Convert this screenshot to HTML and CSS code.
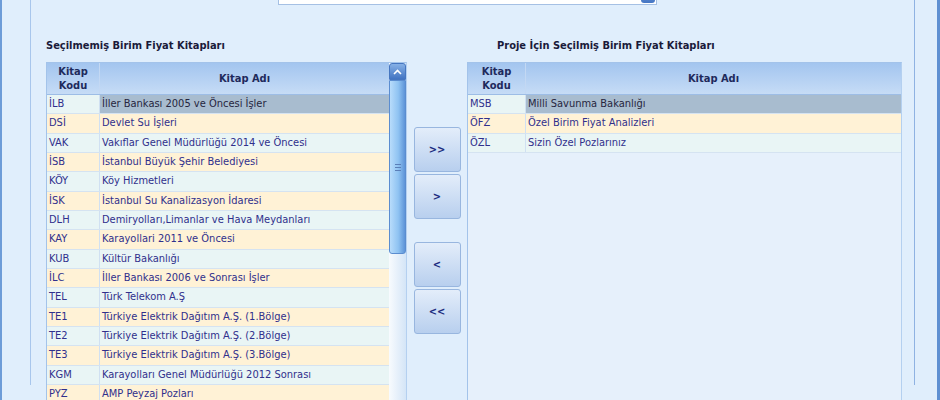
FILE: index.html
```html
<!DOCTYPE html>
<html lang="tr">
<head>
    <meta charset="UTF-8">
    <title>Birim Fiyat Kitapları</title>
    <link rel="stylesheet" href="styles.css">
</head>
<body>
    <div class="frame">
        <div class="panel">
            <div class="top-row">
                <span class="top-label">Hazır Proje Şablonu Seçiniz :</span>
                <div class="combo">
                    <span class="combo-text">Seçilmiş Birim Fiyat Kitapları Şablonu</span>
                    <span class="combo-btn"></span>
                </div>
            </div>

            <div class="lists">
                <div class="side left">
                    <div class="side-title">Seçilmemiş Birim Fiyat Kitapları</div>
                    <div class="grid-box">
                        <div class="grid">
                            <div class="head">
                                <div class="code">Kitap<br>Kodu</div>
                                <div class="name">Kitap Adı</div>
                            </div>
                            <div class="row selected"><div class="code">İLB</div><div class="name">İller Bankası 2005 ve Öncesi İşler</div></div>
                            <div class="row alt"><div class="code">DSİ</div><div class="name">Devlet Su İşleri</div></div>
                            <div class="row"><div class="code">VAK</div><div class="name">Vakıflar Genel Müdürlüğü 2014 ve Öncesi</div></div>
                            <div class="row alt"><div class="code">İSB</div><div class="name">İstanbul Büyük Şehir Belediyesi</div></div>
                            <div class="row"><div class="code">KÖY</div><div class="name">Köy Hizmetleri</div></div>
                            <div class="row alt"><div class="code">İSK</div><div class="name">İstanbul Su Kanalizasyon İdaresi</div></div>
                            <div class="row"><div class="code">DLH</div><div class="name">Demiryolları,Limanlar ve Hava Meydanları</div></div>
                            <div class="row alt"><div class="code">KAY</div><div class="name">Karayollari 2011 ve Öncesi</div></div>
                            <div class="row"><div class="code">KUB</div><div class="name">Kültür Bakanlığı</div></div>
                            <div class="row alt"><div class="code">İLC</div><div class="name">İller Bankası 2006 ve Sonrası İşler</div></div>
                            <div class="row"><div class="code">TEL</div><div class="name">Türk Telekom A.Ş</div></div>
                            <div class="row alt"><div class="code">TE1</div><div class="name">Türkiye Elektrik Dağıtım A.Ş. (1.Bölge)</div></div>
                            <div class="row"><div class="code">TE2</div><div class="name">Türkiye Elektrik Dağıtım A.Ş. (2.Bölge)</div></div>
                            <div class="row alt"><div class="code">TE3</div><div class="name">Türkiye Elektrik Dağıtım A.Ş. (3.Bölge)</div></div>
                            <div class="row"><div class="code">KGM</div><div class="name">Karayolları Genel Müdürlüğü 2012 Sonrası</div></div>
                            <div class="row alt"><div class="code">PYZ</div><div class="name">AMP Peyzaj Pozları</div></div>
                        </div>
                        <div class="scroll">
                            <div class="sb-up">
                                <svg width="9" height="6" viewBox="0 0 9 6"><path d="M1 5 L4.5 1.5 L8 5" fill="none" stroke="#fff" stroke-width="1.6"/></svg>
                            </div>
                            <div class="sb-thumb"><span class="grip"></span></div>
                        </div>
                    </div>
                </div>

                <div class="mover">
                    <div class="btn">&gt;&gt;</div>
                    <div class="btn">&gt;</div>
                    <div class="btn gap">&lt;</div>
                    <div class="btn">&lt;&lt;</div>
                </div>

                <div class="side right">
                    <div class="side-title">Proje İçin Seçilmiş Birim Fiyat Kitapları</div>
                    <div class="grid-box">
                        <div class="grid">
                            <div class="head">
                                <div class="code">Kitap<br>Kodu</div>
                                <div class="name">Kitap Adı</div>
                            </div>
                            <div class="row selected"><div class="code">MSB</div><div class="name">Milli Savunma Bakanlığı</div></div>
                            <div class="row alt"><div class="code">ÖFZ</div><div class="name">Özel Birim Fiyat Analizleri</div></div>
                            <div class="row"><div class="code">ÖZL</div><div class="name">Sizin Özel Pozlarınız</div></div>
                        </div>
                    </div>
                </div>
            </div>
        </div>
    </div>
</body>
</html>
```

FILE: styles.css
```css
body {
    margin: 0;
    height: 400px;
    overflow: hidden;
    background: #e0eefc;
    font-family: "DejaVu Sans Condensed", "DejaVu Sans", sans-serif;
    font-size: 11px;
    color: #30308c;
}

.frame {
    display: flow-root;
    height: 400px;
    box-sizing: border-box;
    border-left: 2px solid #6d9cd8;
    border-right: 3px solid #5f90d2;
    padding: 0 22px 0 28px;
}

.panel {
    height: 100%;
    box-sizing: border-box;
    border-left: 1px solid #a8c6ec;
    border-right: 1px solid #8fb2e2;
    padding: 0 12px 0 15px;
}

/* ust satir (yarisi gorunuyor) */
.top-row {
    display: flex;
    align-items: flex-end;
    height: 20px;
    margin-top: -15px;
}

.top-label {
    width: 232px;
    font-weight: bold;
    color: #1c1c3c;
    line-height: 16px;
    padding-bottom: 2px;
}

.combo {
    width: 379px;
    height: 20px;
    box-sizing: border-box;
    border: 1px solid #a5c0e4;
    background: #fff;
    display: flex;
    align-items: flex-end;
    justify-content: space-between;
    padding-left: 4px;
}

.combo-text {
    color: #2a2a50;
    line-height: 16px;
    padding-bottom: 1px;
}

.combo-btn {
    width: 14px;
    height: 18px;
    margin: 0 1px 1px 0;
    border-radius: 0 0 3px 3px;
    background: linear-gradient(#7aa6e0, #4676c4);
}

.lists {
    display: flex;
}

.side-title {
    margin: 34px 0 9px;
    line-height: 14px;
    font-size: 11px;
    font-weight: bold;
    color: #1a1a3a;
}

.left {
    width: 361px;
}

.right {
    width: 435px;
}

.right .side-title {
    padding-left: 30px;
}

.grid-box {
    display: flex;
    height: 400px;
    border: 1px solid #a3c3ea;
    border-right-color: #b4d0f0;
}

.grid {
    flex: 1;
    background: #e6f0fb;
}

.head {
    display: flex;
    height: 32px;
    box-sizing: border-box;
    border-bottom: 1px solid #9dbde6;
    background: linear-gradient(#a3c5ef, #c6dcf6);
    font-weight: bold;
    color: #1e2a5c;
    line-height: 14px;
}

.head .code,
.head .name {
    display: flex;
    align-items: center;
    justify-content: center;
    text-align: center;
    padding: 0;
    border-right-color: #c3d8f3;
}

.row {
    display: flex;
    height: 19.33px;
    box-sizing: border-box;
    border-bottom: 1px solid #d5e3f1;
    line-height: 18px;
    background: #e9f5f5;
    white-space: nowrap;
}

.row.alt {
    background: #fff2d6;
}

.row.selected .name {
    background: #a8bccf;
    color: #262640;
}

.code {
    width: 53px;
    box-sizing: border-box;
    border-right: 1px solid #d0e0f2;
    padding-left: 2px;
}

.right .code {
    width: 58px;
}

.name {
    flex: 1;
    padding-left: 2px;
    overflow: hidden;
}

.head .name {
    border-right: none;
}

/* kaydirma cubugu */
.scroll {
    width: 17px;
    display: flex;
    flex-direction: column;
    background: linear-gradient(90deg, #f8fbfe, #d4e5f7);
}

.sb-up {
    height: 17px;
    box-sizing: border-box;
    border: 1px solid #4676c0;
    border-radius: 3px 3px 0 0;
    background: linear-gradient(#86b0e6, #4274c2);
    display: flex;
    align-items: center;
    justify-content: center;
}

.sb-thumb {
    height: 174px;
    box-sizing: border-box;
    border: 1px solid #5b8dd0;
    border-radius: 0 0 3px 3px;
    background: linear-gradient(90deg, #b8dcfb, #8fc3f2 55%, #5e94d8);
    display: flex;
    align-items: center;
    justify-content: center;
}

.grip {
    width: 6px;
    height: 5px;
    border-top: 1px solid #5a7fb8;
    border-bottom: 1px solid #5a7fb8;
    background: linear-gradient(transparent 2px, #5a7fb8 2px, #5a7fb8 3px, transparent 3px);
}

/* tasima butonlari */
.mover {
    width: 60px;
    display: flex;
    flex-direction: column;
    align-items: center;
    padding-top: 122px;
}

.btn {
    width: 47px;
    height: 45px;
    box-sizing: border-box;
    margin-bottom: 2px;
    border: 1px solid #98b6df;
    border-radius: 3px;
    background: linear-gradient(#e3edfa, #b8cfee);
    display: flex;
    align-items: center;
    justify-content: center;
    font-weight: bold;
    font-size: 11px;
    color: #1d2d80;
}

.btn.gap {
    margin-top: 21px;
}
```
